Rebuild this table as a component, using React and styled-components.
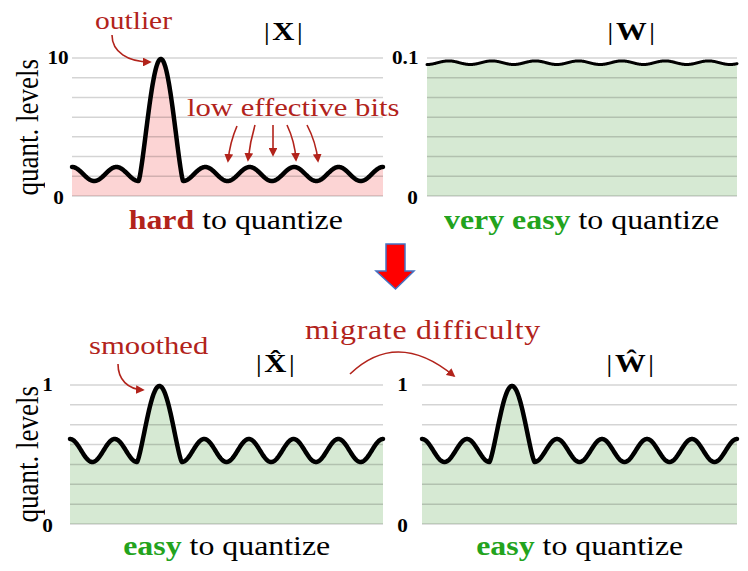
import React from "react";
import styled, { createGlobalStyle } from "styled-components";

const RED = "#b2231b";
const GREEN = "#23a31d";
const PINK = "#fcd4d4";
const MINT = "#d6e9d3";

const GlobalStyle = createGlobalStyle`
  body {
    margin: 0;
    background: #fff;
    font-family: "Liberation Serif", "Times New Roman", serif;
    color: #000;
  }
`;

// the figure's type is a bit wider than plain Times, so text is stretched
const Stretch = styled.span`
  display: inline-block;
  white-space: nowrap;
  transform: scaleX(1.18);
  transform-origin: ${(p) => p.$origin || "center"};
`;

const Figure = styled.div`
  width: 748px;
  height: 571px;
  overflow: hidden;
  display: flex;
  flex-direction: column;
`;

const Row = styled.div`
  position: relative;
  display: flex;
  height: ${(p) => p.$h}px;
  flex: none;
`;

const ArrowRow = styled.div`
  height: 52px;
  flex: none;
  padding: 2px 0 0 374px;
  svg {
    display: block;
  }
`;

const Panel = styled.div`
  position: relative;
  display: grid;
  grid-template-columns: ${(p) => p.$label}px ${(p) => p.$ticks}px ${(p) => p.$plot}px;
  grid-template-rows: ${(p) => p.$head}px ${(p) => p.$ph}px 1fr;
`;

const Title = styled.div`
  grid-column: 3;
  grid-row: 1;
  display: flex;
  align-items: flex-end;
  justify-content: flex-end;
  padding: 0 ${(p) => p.$right}px ${(p) => p.$bottom}px 0;
  font-size: 26px;
  line-height: 28px;
  letter-spacing: 2px;
  b {
    font-weight: 700;
  }
`;

const AxisTitle = styled.div`
  grid-column: 1;
  grid-row: 2;
  display: flex;
  align-items: center;
  justify-content: center;
  padding-left: 10px;
  font-size: 27px;
  span {
    writing-mode: vertical-rl;
    transform: rotate(180deg) scaleX(1.18);
    line-height: 1;
    white-space: nowrap;
  }
`;

const Ticks = styled.div`
  grid-column: 2;
  grid-row: 2;
  display: flex;
  flex-direction: column;
  justify-content: space-between;
  align-items: center;
  margin: -9px 0 -11px;
  padding-right: ${(p) => p.$pr || 0}px;
  font-size: 18px;
  font-weight: 700;
  line-height: 18px;
`;

const PlotBox = styled.div`
  grid-column: 3;
  grid-row: 2;
  svg {
    display: block;
    overflow: visible;
  }
`;

const Caption = styled.div`
  grid-column: 3;
  grid-row: 3;
  text-align: center;
  padding: ${(p) => p.$top}px 0 0 ${(p) => p.$shift || 0}px;
  font-size: 27px;
  line-height: 30px;
`;

const Strong = styled.b`
  color: ${(p) => p.$c};
  font-weight: 700;
`;

const Note = styled.span`
  position: absolute;
  left: ${(p) => p.$x}px;
  top: ${(p) => p.$y}px;
  font-size: ${(p) => p.$size}px;
  letter-spacing: ${(p) => p.$ls || 0}px;
  line-height: 30px;
  color: ${RED};
  white-space: nowrap;
  transform: scaleX(1.18);
  transform-origin: left;
`;

const Overlay = styled.svg`
  position: absolute;
  left: 0;
  top: 0;
  pointer-events: none;
  overflow: visible;
`;

function toPath(pts) {
  return pts.map(([x, y], i) => `${i ? "L" : "M"}${x.toFixed(1)},${y.toFixed(2)}`).join(" ");
}

// ripple with one tall spike at the third crest
function spikyWave(w, peakY, troughY, topY) {
  const P = w / 7;
  const pts = [];
  for (let x = 0; x <= w + 0.01; x += 0.5) {
    const u = x / P;
    let y;
    if (Math.abs(u - 2) <= 0.5) {
      const s = Math.pow((1 + Math.cos(2 * Math.PI * (u - 2))) / 2, 0.65);
      y = troughY - (troughY - topY) * s;
    } else {
      y = (peakY + troughY) / 2 - ((troughY - peakY) / 2) * Math.cos(2 * Math.PI * u);
    }
    pts.push([x, y]);
  }
  return pts;
}

function flatWave(w, mid, amp, period) {
  const pts = [];
  for (let x = 0; x <= w + 0.01; x += 0.5) {
    pts.push([x, mid + amp * Math.cos((2 * Math.PI * x) / period)]);
  }
  return pts;
}

function Plot({ w, h, fill, pts, stroke = 4.5 }) {
  const line = toPath(pts);
  const area = `${line} L${w},${h} L0,${h} Z`;
  const grid = Array.from({ length: 8 }, (_, i) => (h * i) / 7);
  return (
    <PlotBox>
      <svg width={w} height={h} viewBox={`0 0 ${w} ${h}`}>
        <path d={area} fill={fill} />
        {grid.map((y) => (
          <line key={y} x1={0} x2={w} y1={y} y2={y} stroke="rgba(0,0,0,0.17)" strokeWidth={1.5} />
        ))}
        <path d={line} fill="none" stroke="#000" strokeWidth={stroke} strokeLinejoin="round" strokeLinecap="round" />
      </svg>
    </PlotBox>
  );
}

function ArrowDefs({ id }) {
  return (
    <defs>
      <marker id={id} viewBox="0 0 10 10" refX="8" refY="5" markerWidth="5.5" markerHeight="5.5" orient="auto">
        <path d="M0,0 L10,5 L0,10 z" fill={RED} />
      </marker>
    </defs>
  );
}

const arrowProps = (id) => ({
  fill: "none",
  stroke: RED,
  strokeWidth: 1.6,
  markerEnd: `url(#${id})`,
});

function YLabel() {
  return (
    <AxisTitle>
      <span>quant. levels</span>
    </AxisTitle>
  );
}

export default function App() {
  return (
    <>
      <GlobalStyle />
      <Figure>
        <Row $h={240}>
          <Panel $label={44} $ticks={28} $plot={311} $head={58} $ph={138}>
            <Title $right={78} $bottom={12}>
              <Stretch $origin="right">
                |<b>X</b>|
              </Stretch>
            </Title>
            <YLabel />
            <Ticks>
              <Stretch>10</Stretch>
              <Stretch>0</Stretch>
            </Ticks>
            <Plot w={311} h={138} fill={PINK} pts={spikyWave(311, 109, 123, 1)} />
            <Caption $top={9} $shift={16}>
              <Stretch>
                <Strong $c={RED}>hard</Strong> to quantize
              </Stretch>
            </Caption>
            <Note $x={95} $y={6} $size={25}>outlier</Note>
            <Note $x={187} $y={93} $size={26}>low effective bits</Note>
            <Overlay width={383} height={240}>
              <ArrowDefs id="ah-x" />
              <path d="M112,35 C112,52 128,62 150,62" {...arrowProps("ah-x")} />
              <path d="M237,126 Q230,142 228,161" {...arrowProps("ah-x")} />
              <path d="M255,125 Q250,142 248,160" {...arrowProps("ah-x")} />
              <path d="M273,125 L273,155" {...arrowProps("ah-x")} />
              <path d="M287,125 Q295,142 296,160" {...arrowProps("ah-x")} />
              <path d="M307,125 Q316,142 318,161" {...arrowProps("ah-x")} />
            </Overlay>
          </Panel>
          <Panel $label={0} $ticks={44} $plot={310} $head={58} $ph={138}>
            <Title $right={80} $bottom={12}>
              <Stretch $origin="right">
                |<b>W</b>|
              </Stretch>
            </Title>
            <Ticks>
              <Stretch>0.1</Stretch>
              <Stretch style={{ marginLeft: 14 }}>0</Stretch>
            </Ticks>
            <Plot w={310} h={138} fill={MINT} pts={flatWave(310, 4.7, 1.8, 43.3)} stroke={3} />
            <Caption $top={9}>
              <Stretch>
                <Strong $c={GREEN}>very easy</Strong> to quantize
              </Stretch>
            </Caption>
          </Panel>
        </Row>

        <ArrowRow>
          <svg width={42} height={50} viewBox="0 0 42 50">
            <polygon points="12,2 31,2 31,29 40,29 21.5,47 2,29 12,29" fill="#ff0000" stroke="#4472c4" strokeWidth={1.5} strokeLinejoin="miter" />
          </svg>
        </ArrowRow>

        <Row $h={279}>
          <Panel $label={44} $ticks={26} $plot={313} $head={91} $ph={139}>
            <Title $right={86} $bottom={7}>
              <Stretch $origin="right">
                |<b>X&#770;</b>|
              </Stretch>
            </Title>
            <YLabel />
            <Ticks $pr={19}>
              <Stretch>1</Stretch>
              <Stretch>0</Stretch>
            </Ticks>
            <Plot w={313} h={139} fill={MINT} pts={spikyWave(313, 54, 77, 1)} />
            <Caption $top={7}>
              <Stretch>
                <Strong $c={GREEN}>easy</Strong> to quantize
              </Stretch>
            </Caption>
            <Note $x={89} $y={37} $size={26}>smoothed</Note>
            <Overlay width={383} height={279}>
              <ArrowDefs id="ah-xh" />
              <path d="M118,70 C118,86 128,95 143,96" {...arrowProps("ah-xh")} />
            </Overlay>
          </Panel>
          <Panel $label={0} $ticks={39} $plot={315} $head={91} $ph={139}>
            <Title $right={81} $bottom={7}>
              <Stretch $origin="right">
                |<b>Ŵ</b>|
              </Stretch>
            </Title>
            <Ticks>
              <Stretch>1</Stretch>
              <Stretch>0</Stretch>
            </Ticks>
            <Plot w={315} h={139} fill={MINT} pts={spikyWave(315, 54, 77, 1)} />
            <Caption $top={7}>
              <Stretch>
                <Strong $c={GREEN}>easy</Strong> to quantize
              </Stretch>
            </Caption>
          </Panel>
          <Note $x={305} $y={21} $size={27} $ls={0.6}>migrate difficulty</Note>
          <Overlay width={748} height={279}>
            <ArrowDefs id="ah-m" />
            <path d="M350,80 Q397,35 454,82" {...arrowProps("ah-m")} />
          </Overlay>
        </Row>
      </Figure>
    </>
  );
}
